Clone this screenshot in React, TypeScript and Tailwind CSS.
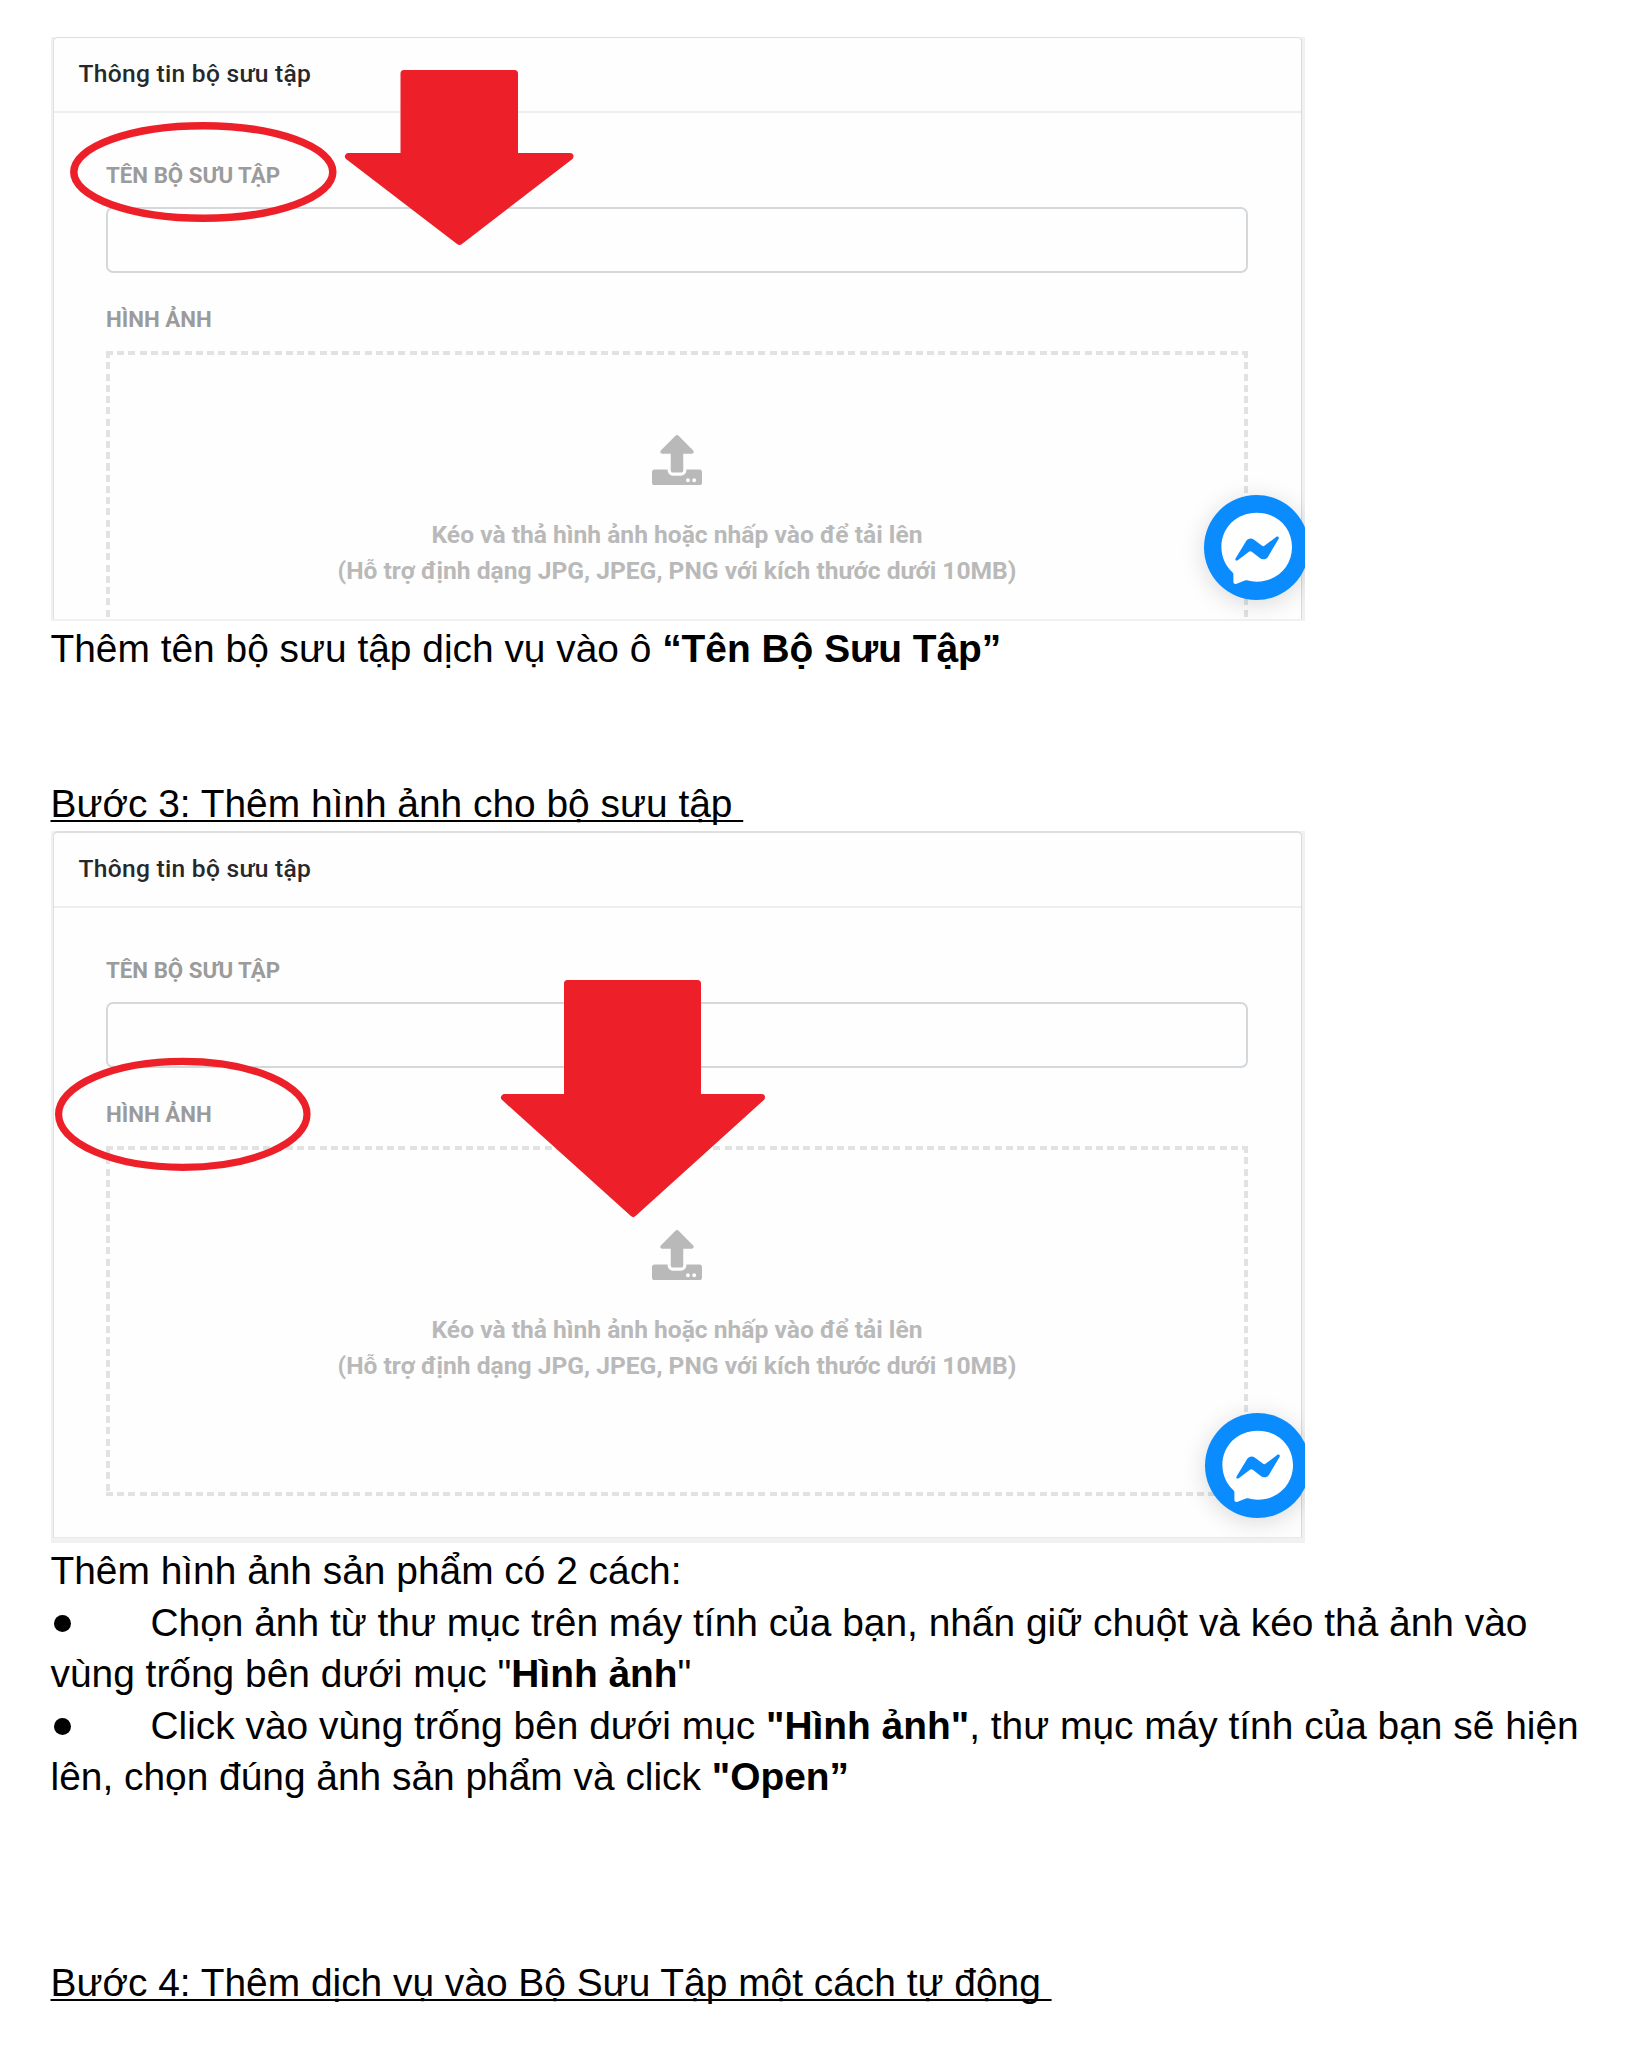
import React from 'react';
import { FaUpload } from 'react-icons/fa';

const DASHES =
  'bg-[repeating-linear-gradient(90deg,#e2e2e2_0_7px,transparent_7px_11.25px),repeating-linear-gradient(90deg,#e2e2e2_0_7px,transparent_7px_11.25px),repeating-linear-gradient(180deg,#e2e2e2_0_7px,transparent_7px_11.25px),repeating-linear-gradient(180deg,#e2e2e2_0_7px,transparent_7px_11.25px)] bg-[position:0_0,0_100%,0_0,100%_0] bg-[size:100%_4px,100%_4px,4px_100%,4px_100%] bg-no-repeat';

const STEP_HEADING = 'underline decoration-[2px] underline-offset-[3px] [text-decoration-skip-ink:none]';

function Messenger({ className }: { className: string }) {
  return (
    <div className={`absolute size-[105px] rounded-full bg-[#0a8cff] shadow-[0_4px_24px_rgba(0,0,0,0.15)] ${className}`}>
      <svg viewBox="0 0 105 105" className="block size-full">
        <path
          fill="#fff"
          d="M52.7 17.7C32.5 17.7 17.4 32.6 17.4 52c0 10.200 4.200 19 11 25.200.7.600 1 1.400 1 2.300v7.300c0 1.800 1.600 2.600 3.200 2l8.300-3.400c.6-.3 1.300-.3 2-.1 3.100.9 6.400 1.400 9.800 1.400 20.200 0 35.300-14.900 35.300-34.600S72.900 17.700 52.700 17.700z"
        />
        <path
          fill="#0a8cff"
          d="M31.700 63.300 42 46.200c1.900-3 5.300-3.500 8-1.500l7.800 5.900c1 .7 2 .7 3 0l11.300-8.600c1.900-1.300 3.500.2 2.300 2.300L64 61.700c-1.800 2.900-5.400 3.500-8.200 1.400l-8-6.300c-.9-.7-2-.7-2.900 0l-10.800 8.200c-1.900 1.300-3.600.2-2.400-1.700z"
        />
      </svg>
    </div>
  );
}

type CardProps = {
  height: string;
  frame: string;
  zone: string;
  children: React.ReactNode;
};

function CollectionCard({ height, frame, zone, children }: CardProps) {
  return (
    <section className={`relative w-[1254.5px] overflow-hidden bg-[#f1f1f1] pr-[3px] pl-[2px] font-[Roboto,sans-serif] ${height}`}>
      <div className={`overflow-hidden rounded-t-[5px] border-x border-[#dfdfdf] border-r-[#dadada] bg-[#fefefe] ${frame}`}>
        <h2 className="h-[75px] border-b-2 border-[#eeeeee] pl-[25px] text-[24.6px] leading-[72px] font-medium tracking-[0.27px] text-[#26282b]">
          Thông tin bộ sưu tập
        </h2>
        <div className="ml-[52.5px] w-[1142px]">
          <div className="pt-[46px] text-[22.3px] leading-[32px] font-bold text-[#9b9b9b]">TÊN BỘ SƯU TẬP</div>
          <div className="mt-[16px] h-[66px] rounded-[7px] border-2 border-[#d5d8db]" />
          <div className="mt-[30px] text-[22.3px] leading-[33px] font-bold text-[#9b9b9b]">HÌNH ẢNH</div>
          <div
            className={`mt-[15px] flex flex-col items-center pt-[84px] text-center text-[24.6px] leading-[36px] font-bold text-[#b9b9b9] ${DASHES} ${zone}`}
          >
            <FaUpload className="size-[50px]" />
            <p className="mt-[32px] whitespace-nowrap">Kéo và thả hình ảnh hoặc nhấp vào để tải lên</p>
            <p className="whitespace-nowrap">(Hỗ trợ định dạng JPG, JPEG, PNG với kích thước dưới 10MB)</p>
          </div>
        </div>
      </div>
      {children}
    </section>
  );
}

export default function App() {
  return (
    <main className="h-[2049px] w-[1642px] overflow-hidden bg-white pt-[37px] pl-[50.5px] font-['Liberation_Sans',Arial,sans-serif] text-[38.88px] leading-[51.5px] whitespace-pre text-black">
      <div className="relative">
        <CollectionCard height="h-[584px]" frame="h-[582px] border-t" zone="h-[300px]">
          <Messenger className="top-[458px] left-[1153px]" />
        </CollectionCard>
        <svg className="absolute top-0 left-0" width="600" height="300" viewBox="51 37 600 300">
          <ellipse cx="203.300" cy="172" rx="129.500" ry="46.200" fill="none" stroke="#ed2029" strokeWidth="7.500" />
          <path
            d="M404 73.500H514.500V156.500H570L459.500 241.500L348.500 156.500H404Z"
            fill="#ed2029"
            stroke="#ed2029"
            strokeWidth="7"
            strokeLinejoin="round"
          />
        </svg>
      </div>
      <p className="mt-[2px]">
        Thêm tên bộ sưu tập dịch vụ vào ô <b>“Tên Bộ Sưu Tập”</b>
      </p>
      <h1 className={`mt-[103px] ${STEP_HEADING}`}>{'Bước 3: Thêm hình ảnh cho bộ sưu tập '}</h1>
      <div className="relative mt-[2px]">
        <CollectionCard height="h-[712px]" frame="h-[707px] border-t-2 border-b border-b-[#e9e9e9]" zone="h-[350px]">
          <Messenger className="top-[582px] left-[1154px]" />
        </CollectionCard>
        <svg className="absolute top-0 left-0" width="800" height="450" viewBox="51 831 800 450">
          <ellipse cx="182.800" cy="1114.300" rx="124.200" ry="53" fill="none" stroke="#ed2029" strokeWidth="7.200" />
          <path
            d="M567.500 983.500H697.500V1097.500H761.500L633.200 1213.500L504.500 1097.500H567.500Z"
            fill="#ed2029"
            stroke="#ed2029"
            strokeWidth="7"
            strokeLinejoin="round"
          />
        </svg>
      </div>
      <p className="mt-[2px]">Thêm hình ảnh sản phẩm có 2 cách:</p>
      <div>
        <div className="flex items-center">
          <span className="mt-[2px] ml-[3px] size-[17px] rounded-full bg-black" />
          <span className="ml-[80px]">Chọn ảnh từ thư mục trên máy tính của bạn, nhấn giữ chuột và kéo thả ảnh vào</span>
        </div>
        <p>
          vùng trống bên dưới mục "<b>Hình ảnh</b>"
        </p>
      </div>
      <div>
        <div className="flex items-center">
          <span className="mt-[2px] ml-[3px] size-[17px] rounded-full bg-black" />
          <span className="ml-[80px]">
            Click vào vùng trống bên dưới mục <b>"Hình ảnh"</b>, thư mục máy tính của bạn sẽ hiện
          </span>
        </div>
        <p>
          lên, chọn đúng ảnh sản phẩm và click <b>"Open”</b>
        </p>
      </div>
      <h1 className={`mt-[154px] ${STEP_HEADING}`}>{'Bước 4: Thêm dịch vụ vào Bộ Sưu Tập một cách tự động '}</h1>
    </main>
  );
}
